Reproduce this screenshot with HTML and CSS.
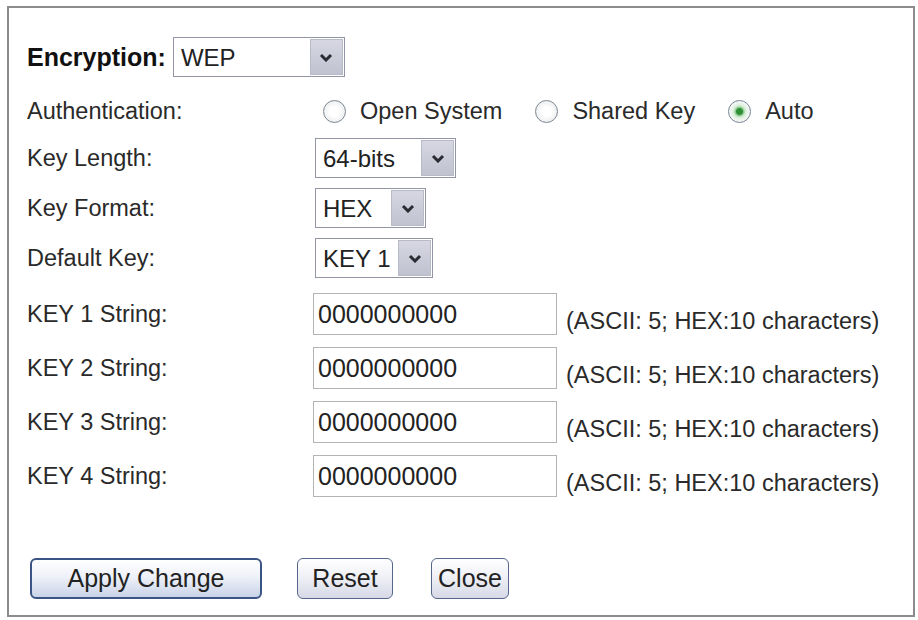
FILE: index.html
```html
<!DOCTYPE html>
<html>
<head>
  <title>Wireless Security Setup</title>
  <link rel="stylesheet" href="styles.css">
</head>
<body>
  <div class="frame">
    <form class="form" onsubmit="return false">
      <div class="row-enc">
        <label class="enc-label" for="encryption">Encryption:</label>
        <div class="select select-enc">
          <select id="encryption">
            <option>WEP</option>
            <option>WPA</option>
            <option>WPA2</option>
            <option>None</option>
          </select>
          <span class="arrow"><svg width="14" height="9" viewBox="0 0 14 9"><path d="M2 2 L7 7 L12 2" fill="none" stroke="#2b2b33" stroke-width="3"/></svg></span>
        </div>
      </div>

      <div class="row row-auth">
        <span class="label">Authentication:</span>
        <div class="radios">
          <label class="radio"><input type="radio" name="auth"> Open System</label>
          <label class="radio"><input type="radio" name="auth"> Shared Key</label>
          <label class="radio"><input type="radio" name="auth" checked> Auto</label>
        </div>
      </div>

      <div class="row">
        <label class="label" for="keylen">Key Length:</label>
        <div class="select select-len">
          <select id="keylen">
            <option>64-bits</option>
            <option>128-bits</option>
          </select>
          <span class="arrow"><svg width="14" height="9" viewBox="0 0 14 9"><path d="M2 2 L7 7 L12 2" fill="none" stroke="#2b2b33" stroke-width="3"/></svg></span>
        </div>
      </div>

      <div class="row">
        <label class="label" for="keyfmt">Key Format:</label>
        <div class="select select-fmt">
          <select id="keyfmt">
            <option>HEX</option>
            <option>ASCII</option>
          </select>
          <span class="arrow"><svg width="14" height="9" viewBox="0 0 14 9"><path d="M2 2 L7 7 L12 2" fill="none" stroke="#2b2b33" stroke-width="3"/></svg></span>
        </div>
      </div>

      <div class="row">
        <label class="label" for="defkey">Default Key:</label>
        <div class="select select-key">
          <select id="defkey">
            <option>KEY 1</option>
            <option>KEY 2</option>
            <option>KEY 3</option>
            <option>KEY 4</option>
          </select>
          <span class="arrow"><svg width="14" height="9" viewBox="0 0 14 9"><path d="M2 2 L7 7 L12 2" fill="none" stroke="#2b2b33" stroke-width="3"/></svg></span>
        </div>
      </div>

      <div class="row key-row key-first">
        <label class="label" for="key1">KEY 1 String:</label>
        <input class="key-input" type="text" id="key1" value="0000000000">
        <span class="hint">(ASCII: 5; HEX:10 characters)</span>
      </div>
      <div class="row key-row">
        <label class="label" for="key2">KEY 2 String:</label>
        <input class="key-input" type="text" id="key2" value="0000000000">
        <span class="hint">(ASCII: 5; HEX:10 characters)</span>
      </div>
      <div class="row key-row">
        <label class="label" for="key3">KEY 3 String:</label>
        <input class="key-input" type="text" id="key3" value="0000000000">
        <span class="hint">(ASCII: 5; HEX:10 characters)</span>
      </div>
      <div class="row key-row">
        <label class="label" for="key4">KEY 4 String:</label>
        <input class="key-input" type="text" id="key4" value="0000000000">
        <span class="hint">(ASCII: 5; HEX:10 characters)</span>
      </div>

      <div class="actions">
        <button class="btn btn-apply" type="submit">Apply Change</button>
        <button class="btn btn-reset" type="reset">Reset</button>
        <button class="btn btn-close" type="button">Close</button>
      </div>
    </form>
  </div>
</body>
</html>
```

FILE: styles.css
```css
body {
  margin: 0;
  background-color: #fff;
  font-family: "Liberation Sans", Arial, sans-serif;
  font-size: 23.5px;
  color: #2a2a2a;
}
.frame {
  box-sizing: border-box;
  height: 611px;
  margin: 6px 3px 0 7px;
  padding: 29px 0 0 18px;
  border: 2px solid #8c8c8c;
}
.form {
  display: flex;
  flex-direction: column;
  gap: 10px;
}
.row-enc {
  display: flex;
  align-items: center;
  gap: 7px;
  height: 40px;
}
.enc-label {
  font-weight: bold;
  font-size: 25px;
  color: #111;
}
.row {
  display: grid;
  grid-template-columns: 288px auto;
  align-items: center;
  height: 40px;
}
.row-auth {
  height: 34px;
  margin-top: 7px;
}

/* select box with the grey arrow button */
.select {
  box-sizing: border-box;
  display: inline-flex;
  height: 40px;
  border: 1px solid #9296a4;
  background-color: #fff;
  justify-self: start;
}
.select select {
  flex: 1;
  min-width: 0;
  border: none;
  outline: none;
  background: transparent;
  -webkit-appearance: none;
  appearance: none;
  padding: 0 0 0 7px;
  font-family: inherit;
  font-size: 24px;
  color: #222;
}
.select .arrow {
  display: flex;
  align-items: center;
  justify-content: center;
  width: 31px;
  margin: 1px;
  border: 1px solid #b8bac8;
  background: linear-gradient(#d6d7e2, #c0c2d0);
}
.select-enc { width: 172px; }
.select-len { width: 141px; }
.select-fmt { width: 111px; }
.select-key { width: 118px; }

.radios {
  display: flex;
  align-items: center;
  gap: 33px;
  padding-left: 8px;
}
.radio {
  display: flex;
  align-items: center;
  gap: 14px;
}
.radio input {
  -webkit-appearance: none;
  appearance: none;
  width: 23px;
  height: 23px;
  margin: 0;
  border: 1px solid #7d8791;
  border-radius: 50%;
  background: radial-gradient(circle, #fff 0 30%, #e2e4e7 100%);
}
.radio input:checked {
  border-color: #7a8596;
  background: radial-gradient(circle, #2f8f36 0 3px, #8cc98f 4px, #d8eed8 6px, #f2f6f2 9px);
}

.key-row {
  grid-template-columns: 286px 244px auto;
  height: 42px;
  margin-top: 2px;
}
.key-first {
  margin-top: 5px;
}
.key-input {
  box-sizing: border-box;
  height: 42px;
  width: 244px;
  padding: 0 4px;
  border: 1px solid #b4b4b4;
  font-family: inherit;
  font-size: 25px;
  color: #222;
}
.hint {
  align-self: end;
  margin-left: 9px;
  white-space: nowrap;
}

.actions {
  display: flex;
  gap: 35px;
  margin: 51px 0 0 3px;
}
.btn {
  box-sizing: border-box;
  height: 41px;
  padding: 0;
  border: 1px solid #56658a;
  border-radius: 6px;
  background: linear-gradient(#ffffff 0%, #f0f1f6 45%, #d6d9e6 100%);
  font-family: inherit;
  font-size: 25px;
  color: #222;
}
.btn-apply {
  width: 232px;
  border: 2px solid #3a5585;
  background: linear-gradient(#ffffff 0%, #eef1f8 45%, #c9d3e8 100%);
}
.btn-reset { width: 96px; }
.btn-close { width: 78px; margin-left: 3px; }
```
